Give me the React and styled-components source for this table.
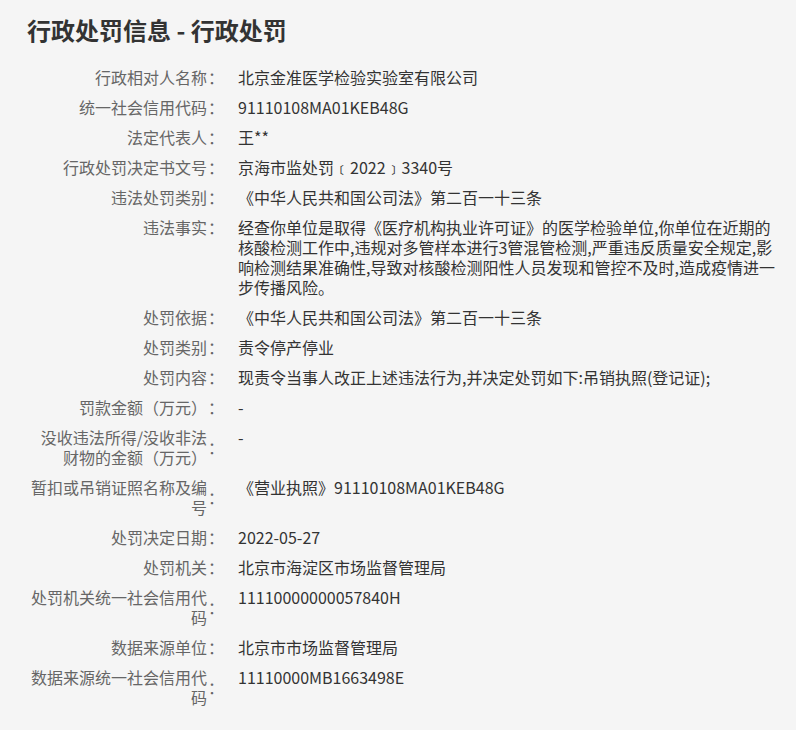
import React from 'react';
import styled, { createGlobalStyle } from 'styled-components';

const GlobalStyle = createGlobalStyle`
  html, body {
    margin: 0;
    padding: 0;
    background: #f5f5f5;
  }
  body {
    font-family: "Noto Sans CJK SC", "Noto Sans", sans-serif;
  }
`;

const Page = styled.div`
  width: 796px;
  min-height: 730px;
  box-sizing: border-box;
  padding: 12px 0 0 27px;
  background: #f5f5f5;
`;

const Title = styled.h1`
  margin: 0 0 14px;
  color: #333;
  font-size: 24px;
  font-weight: 700;
  line-height: 36px;
`;

const List = styled.dl`
  margin: 0;
  padding: 0 0 0 3px;
`;

const Row = styled.div`
  display: flex;
  align-items: flex-start;
  padding: 5px 0;
  font-size: 16px;
  line-height: 20px;
`;

const Label = styled.dt`
  display: flex;
  align-items: center;
  flex: none;
  color: #666;
`;

const LabelText = styled.span`
  width: 177px;
  text-align: right;
`;

const Colon = styled.span`
  width: 31px;
  padding-left: 1px;
  box-sizing: border-box;
`;

const Value = styled.dd`
  width: 540px;
  margin: 0;
  color: #333;
  word-break: break-all;
`;

const rows = [
  ['行政相对人名称', '北京金准医学检验实验室有限公司'],
  ['统一社会信用代码', '91110108MA01KEB48G'],
  ['法定代表人', '王**'],
  ['行政处罚决定书文号', '京海市监处罚﹝2022﹞3340号'],
  ['违法处罚类别', '《中华人民共和国公司法》第二百一十三条'],
  [
    '违法事实',
    '经查你单位是取得《医疗机构执业许可证》的医学检验单位,你单位在近期的核酸检测工作中,违规对多管样本进行3管混管检测,严重违反质量安全规定,影响检测结果准确性,导致对核酸检测阳性人员发现和管控不及时,造成疫情进一步传播风险。',
  ],
  ['处罚依据', '《中华人民共和国公司法》第二百一十三条'],
  ['处罚类别', '责令停产停业'],
  ['处罚内容', '现责令当事人改正上述违法行为,并决定处罚如下:吊销执照(登记证);'],
  ['罚款金额（万元）', '-'],
  ['没收违法所得/没收非法财物的金额（万元）', '-'],
  ['暂扣或吊销证照名称及编号', '《营业执照》91110108MA01KEB48G'],
  ['处罚决定日期', '2022-05-27'],
  ['处罚机关', '北京市海淀区市场监督管理局'],
  ['处罚机关统一社会信用代码', '11110000000057840H'],
  ['数据来源单位', '北京市市场监督管理局'],
  ['数据来源统一社会信用代码', '11110000MB1663498E'],
];

function App() {
  return (
    <Page>
      <GlobalStyle />
      <Title>行政处罚信息 - 行政处罚</Title>
      <List>
        {rows.map(([label, value]) => (
          <Row key={label}>
            <Label>
              <LabelText>{label}</LabelText>
              <Colon>：</Colon>
            </Label>
            <Value>{value}</Value>
          </Row>
        ))}
      </List>
    </Page>
  );
}

export default App;
